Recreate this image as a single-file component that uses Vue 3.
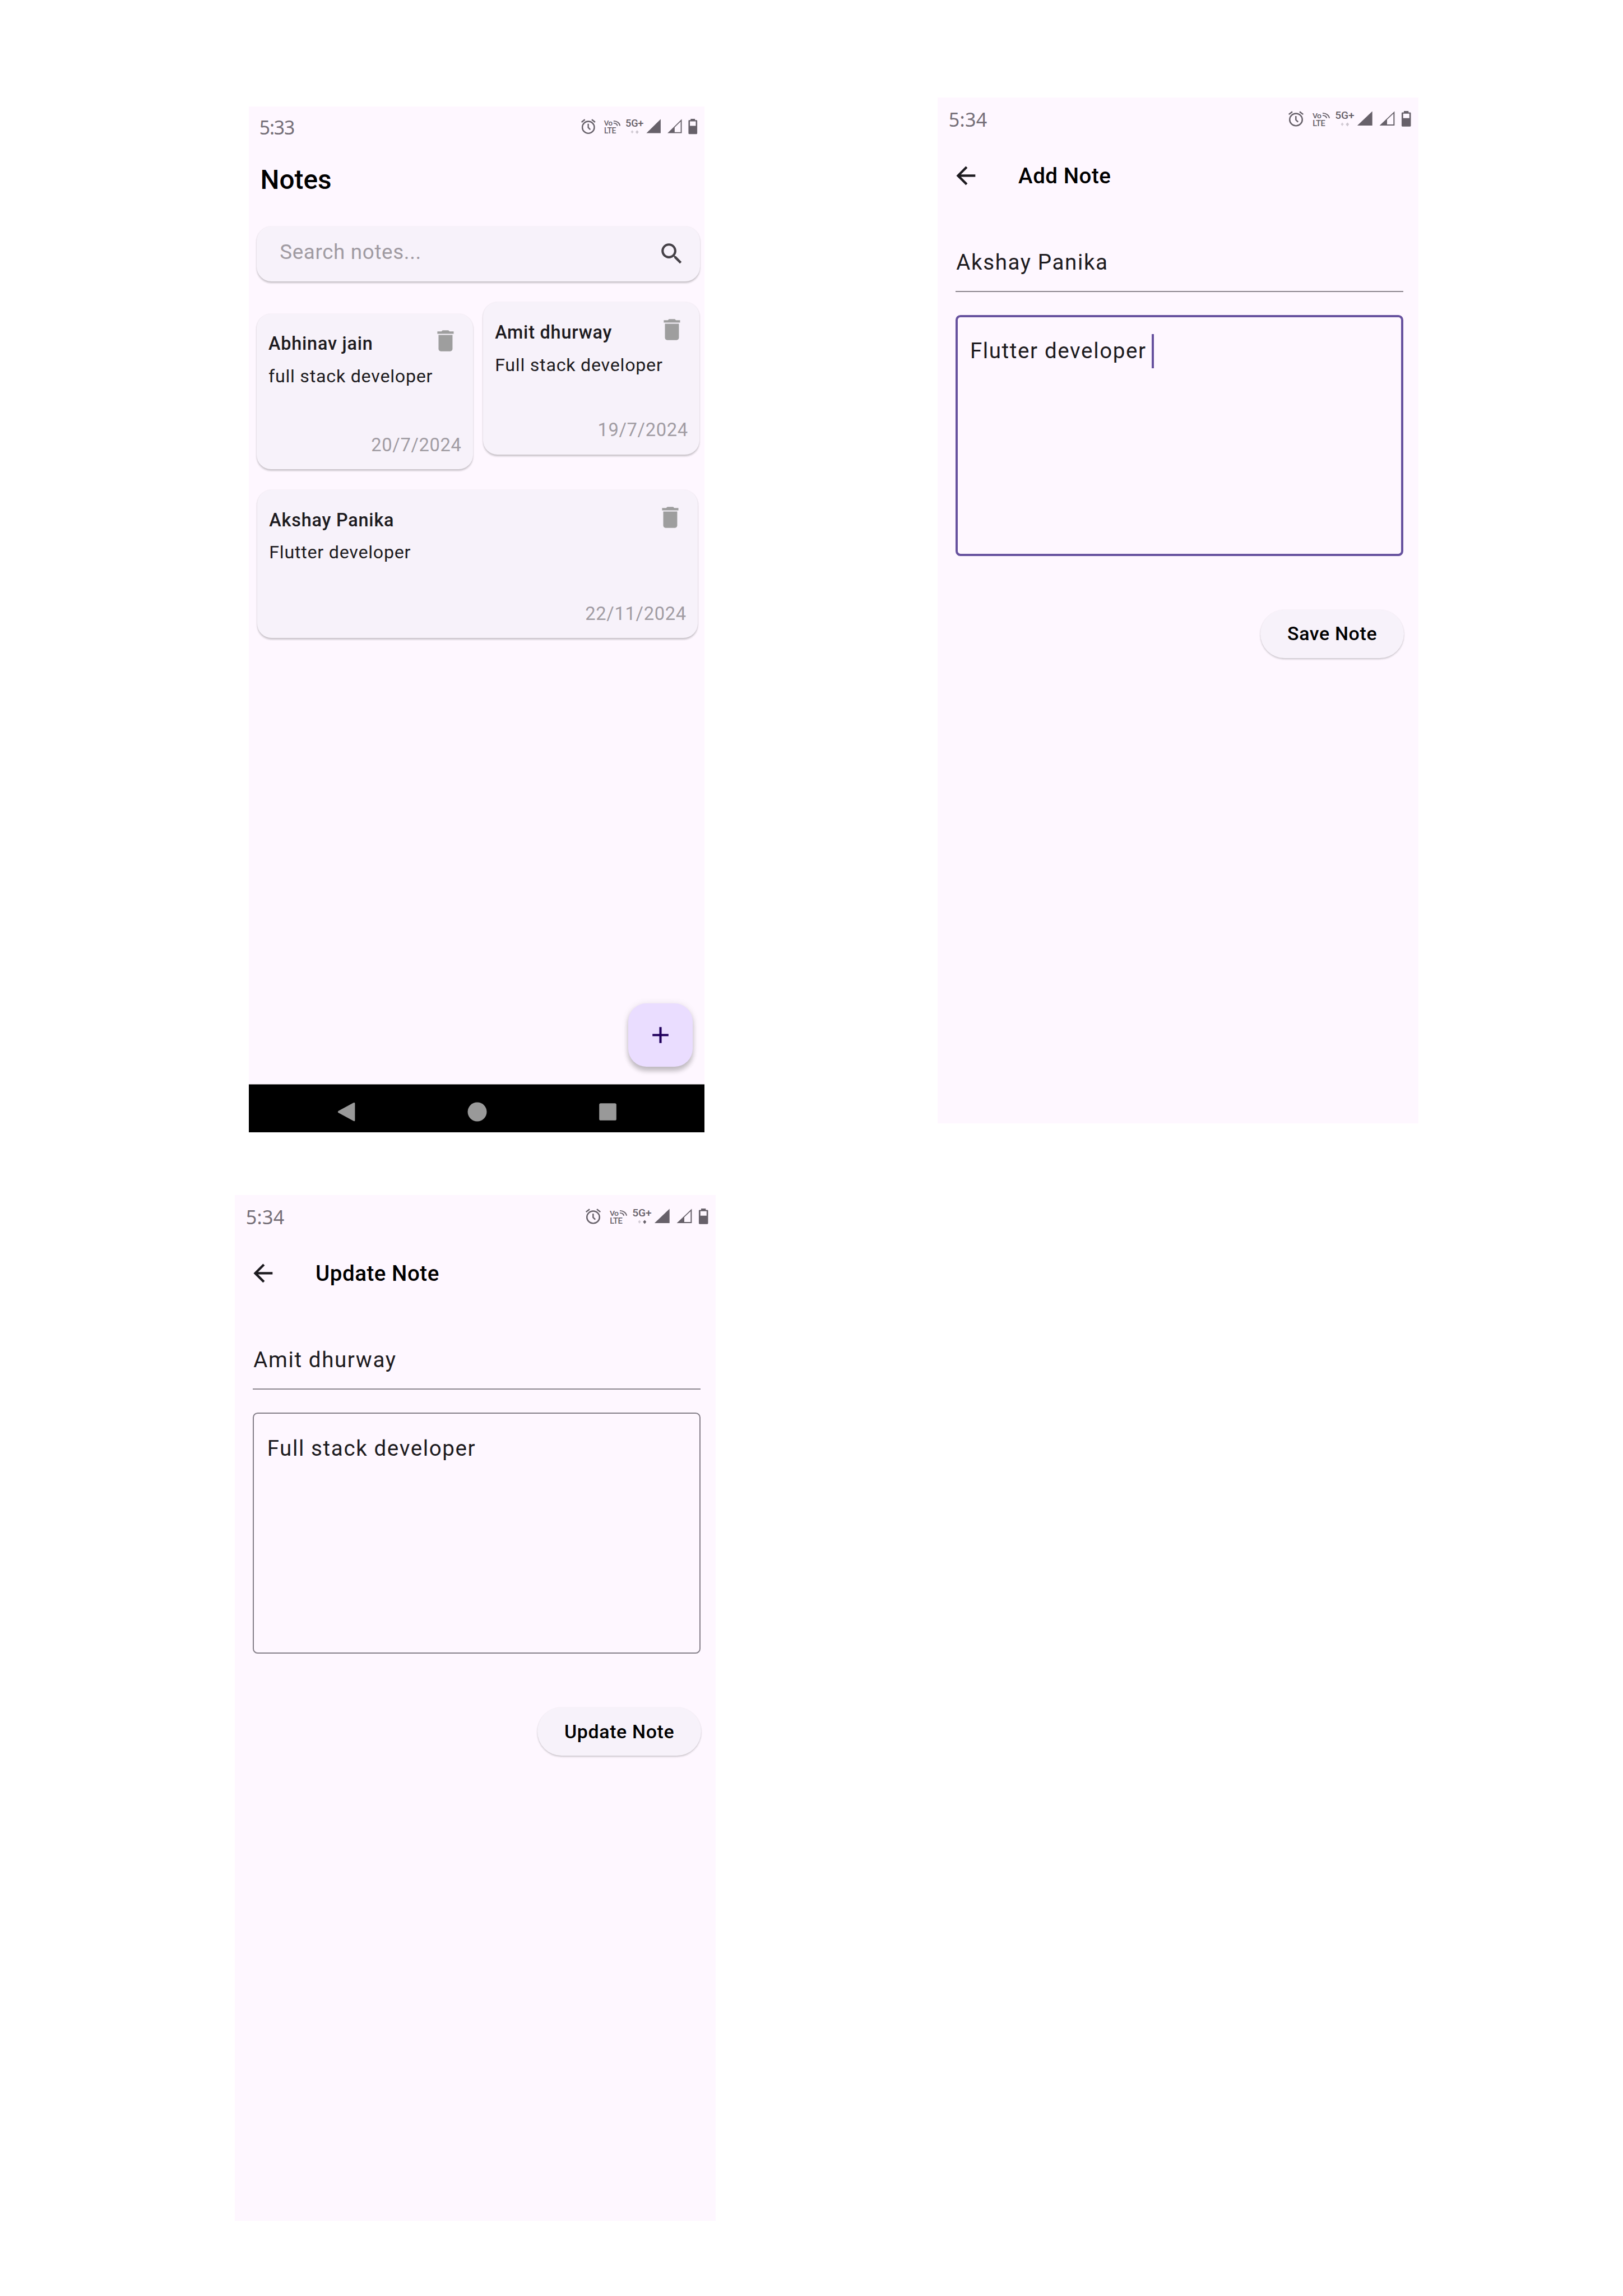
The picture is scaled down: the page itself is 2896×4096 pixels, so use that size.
<script setup>
import { h } from 'vue'

const topNotes = [
  { title: 'Abhinav jain', body: 'full stack developer', date: '20/7/2024', cls: 'lower' },
  { title: 'Amit dhurway', body: 'Full stack developer', date: '19/7/2024', cls: 'upper' },
]
const wideNote = { title: 'Akshay Panika', body: 'Flutter developer', date: '22/11/2024', cls: 'wide' }

const editors = [
  { cls: 'add', heading: 'Add Note', name: 'Akshay Panika', body: 'Flutter developer', focused: true, action: 'Save Note' },
  { cls: 'update', heading: 'Update Note', name: 'Amit dhurway', body: 'Full stack developer', focused: false, action: 'Update Note' },
]

const StatusIcons = (props) =>
  h('svg', { class: 'icons', viewBox: '0 0 236.5 31', preserveAspectRatio: 'none', fill: '#67616a' }, [
    h('g', { fill: 'none', stroke: '#67616a', 'stroke-width': 2.7 }, [
      h('circle', { cx: 14.6, cy: 17.3, r: 12.2 }),
      h('path', { d: 'M.8 6.8 7.6 1.4M28.4 6.8 21.6 1.4M14.4 10v7.6l4.2 4.4' }),
    ]),
    h('text', { class: 'net', x: 46.6, y: 14.2, 'font-size': 15.3, 'letter-spacing': -0.8 }, 'Vo'),
    h('path', {
      d: 'M66 4.400C73 4.400 78.500 8.500 79 14.300M66 8.800C70.500 9 73.300 11 73.800 14.300',
      fill: 'none',
      stroke: '#67616a',
      'stroke-width': 2.1,
    }),
    h('text', { class: 'net', x: 46.8, y: 30, 'font-size': 16, 'letter-spacing': -0.5 }, 'LTE'),
    h('text', { class: 'net', x: 90.2, y: 15.6, 'font-size': 20.8, 'letter-spacing': -0.2 }, '5G+'),
    h('path', { d: 'M104 23l2.800 3.500-2.800 3.500-2.800-3.500z', fill: '#d3ccd5' }),
    h('path', { d: 'M114 23l3.200 3.700-3.200 4-3.200-4z', fill: props.active ? '#67616a' : '#cdc6cf' }),
    h('path', { d: 'M133 29 162 .6V29z' }),
    h('path', { d: 'M176 29 205 .6V29zM190.500 27h12.300V5.400L190.500 17.500z', 'fill-rule': 'evenodd' }),
    h('path', {
      d: 'M223 0h9v2.700h3a1.500 1.500 0 0 1 1.500 1.500V29.500a1.500 1.500 0 0 1-1.500 1.500H220.100a1.500 1.500 0 0 1-1.500-1.500V4.200a1.500 1.500 0 0 1 1.500-1.500H223zM221.600 5.200V14.300H233.600V5.200z',
      'fill-rule': 'evenodd',
    }),
  ])
StatusIcons.props = ['active']

const NoteCard = (props) =>
  h('article', { class: ['card', props.note.cls] }, [
    h('header', { class: 'card-head' }, [
      h('h2', props.note.title),
      h('svg', { class: 'trash', viewBox: '0 0 24 24', fill: '#9e9e9e' }, [
        h('path', { d: 'M6 19c0 1.100.9 2 2 2h8c1.100 0 2-.9 2-2V7H6v12zM19 4h-3.500l-1-1h-5l-1 1H5v2h14V4z' }),
      ]),
    ]),
    h('p', { class: 'body' }, props.note.body),
    h('time', { class: 'date' }, props.note.date),
  ])
NoteCard.props = ['note']
</script>

<template>
  <main class="sheet">
    <section class="phone list">
      <div class="status">
        <span class="clock">5:33</span>
        <StatusIcons :active="false" />
      </div>
      <h1>Notes</h1>
      <div class="search">
        <span>Search notes...</span>
        <svg viewBox="0 0 24 24" fill="#454147">
          <path d="M15.500 14h-.79l-.28-.27C15.410 12.590 16 11.110 16 9.500 16 5.910 13.090 3 9.500 3S3 5.910 3 9.500 5.910 16 9.500 16c1.610 0 3.090-.59 4.230-1.570l.27.28v.79l5 4.990L20.490 19l-4.990-5zm-6 0C7.010 14 5 11.990 5 9.500S7.010 5 9.500 5 14 7.010 14 9.500 11.990 14 9.500 14z" />
        </svg>
      </div>
      <div class="pair">
        <NoteCard v-for="n in topNotes" :key="n.title" :note="n" />
      </div>
      <NoteCard :note="wideNote" />
      <button class="fab" aria-label="Add">
        <svg viewBox="0 0 24 24" fill="#21005d"><path d="M19 13h-6v6h-2v-6H5v-2h6V5h2v6h6v2z" /></svg>
      </button>
      <nav class="navbar">
        <svg viewBox="0 0 40 40"><path d="M34 1.500Q37 0 37 3V37Q37 40 34 38.500L3.500 22Q.5 20 3.500 18z" /></svg>
        <svg viewBox="0 0 40 40"><circle cx="20" cy="20" r="19.400" /></svg>
        <svg viewBox="0 0 40 40"><rect x="2.500" y="2.500" width="35" height="35" rx="3" /></svg>
      </nav>
    </section>

    <section v-for="e in editors" :key="e.cls" class="phone editor" :class="e.cls">
      <div class="status">
        <span class="clock">5:34</span>
        <StatusIcons :active="!e.focused" />
      </div>
      <div class="appbar">
        <svg viewBox="0 0 24 24" fill="#1d1b20"><path d="M20 11H7.830l5.590-5.590L12 4l-8 8 8 8 1.410-1.410L7.830 13H20v-2z" /></svg>
        <h1>{{ e.heading }}</h1>
      </div>
      <div class="name"><span>{{ e.name }}</span></div>
      <div class="area" :class="{ focused: e.focused }">
        <span>{{ e.body }}</span><i v-if="e.focused" class="caret"></i>
      </div>
      <button class="action">{{ e.action }}</button>
    </section>
  </main>
</template>

<style>
html {
  font-size: 8.7572px;
}
body {
  margin: 0;
  background: #fff;
}
</style>

<style scoped>
.sheet {
  display: grid;
  grid-template-columns: 50.65rem 92.9rem 47.45rem 98.1rem;
  grid-template-rows: 243.5rem 224.2rem;
  width: 330.7rem;
  height: 467.7rem;
  overflow: hidden;
  background: #fff;
  font-family: Roboto, 'Liberation Sans', sans-serif;
  color: #1d1b20;
}
.sheet :deep(*) {
  box-sizing: border-box;
}
.sheet :deep(h1),
.sheet :deep(h2),
.sheet :deep(p) {
  margin: 0;
  font-weight: 500;
}
.sheet :deep(button) {
  border: 0;
  padding: 0;
  font-family: inherit;
}
.phone {
  position: relative;
  display: flex;
  flex-direction: column;
  background: #fef7ff;
}
.list {
  grid-area: 1 / 2;
  margin-top: 21.7rem;
  height: 209rem;
}
.add {
  grid-area: 1 / 4;
  margin-top: 19.9rem;
}
.update {
  grid-area: 2 / 1 / 3 / 3;
  margin-left: 47.8rem;
}
.editor {
  width: 98.05rem;
  height: 208.95rem;
}

.status {
  display: flex;
  justify-content: space-between;
  align-items: flex-start;
  height: 9rem;
  padding: 2.55rem 1.5rem 0 2.2rem;
}
.clock {
  margin-top: -0.3rem;
  font-family: 'Noto Sans', sans-serif;
  font-size: 3.85rem;
  font-weight: 400;
  line-height: 4rem;
  letter-spacing: -0.13rem;
  color: #756f78;
}
.status :deep(.icons) {
  width: 23.65rem;
  height: 3.1rem;
  overflow: visible;
}
.status :deep(.net) {
  font-weight: 500;
}
.editor .status {
  padding: 2.75rem 1.6rem 0 2.3rem;
}
.editor .clock {
  margin-top: -0.4rem;
  font-size: 3.9rem;
  letter-spacing: 0.03rem;
}
.editor .status :deep(.icons) {
  width: 24.95rem;
  height: 3.16rem;
}

.list h1 {
  padding-left: 2.4rem;
  font-size: 5.45rem;
  line-height: 12.1rem;
  color: #000;
}
.search {
  display: flex;
  justify-content: space-between;
  align-items: center;
  height: 11.2rem;
  margin: 3.3rem 0.9rem 0 1.6rem;
  padding: 0 2.9rem 0 4.75rem;
  border-radius: 3rem;
  background: #f7f2fa;
  box-shadow: 0 0.25rem 0.35rem rgba(0, 0, 0, 0.2), 0 0 0.3rem rgba(0, 0, 0, 0.06);
}
.search span {
  margin-top: -0.8rem;
  font-size: 4.2rem;
  letter-spacing: 0.075rem;
  color: #a09ba2;
}
.search svg {
  width: 5.65rem;
  height: 5.65rem;
}
.pair {
  display: flex;
  align-items: flex-start;
  gap: 2.1rem;
  margin: 4.3rem 1.05rem 0 1.65rem;
}
.phone :deep(.card) {
  display: flex;
  flex-direction: column;
  width: 44.05rem;
  padding: 2.7rem 2.4rem 2.9rem;
  border-radius: 2.9rem;
  background: #f7f2fa;
  box-shadow: 0 0.25rem 0.35rem rgba(0, 0, 0, 0.2), 0 0 0.3rem rgba(0, 0, 0, 0.06);
}
.phone :deep(.lower) {
  height: 31.7rem;
  margin-top: 2.3rem;
}
.phone :deep(.upper) {
  height: 31rem;
}
.phone :deep(.wide) {
  width: 89.7rem;
  height: 30.2rem;
  margin: 4.2rem 0 0 1.8rem;
}
.phone :deep(.card-head) {
  display: flex;
  justify-content: space-between;
}
.phone :deep(.card-head h2) {
  margin-top: 1.5rem;
  font-size: 3.7rem;
  line-height: 4rem;
  letter-spacing: 0.09rem;
}
.phone :deep(.trash) {
  width: 5.7rem;
  height: 5.7rem;
  margin-right: 0.3rem;
}
.phone :deep(.card .body) {
  margin-top: 2.35rem;
  font-size: 3.68rem;
  font-weight: 400;
  line-height: 4rem;
  letter-spacing: 0.085rem;
}
.phone :deep(.date) {
  margin-top: auto;
  align-self: flex-end;
  margin-right: -0.1rem;
  font-size: 3.73rem;
  line-height: 4rem;
  letter-spacing: 0.075rem;
  color: #a19ca3;
}
.fab {
  position: absolute;
  right: 2.4rem;
  bottom: 13.45rem;
  display: flex;
  align-items: center;
  justify-content: center;
  width: 13.1rem;
  height: 12.9rem;
  border-radius: 3.7rem;
  background: #eaddff;
  box-shadow: 0 0.8rem 1rem rgba(0, 0, 0, 0.2), 0 0.2rem 1.4rem rgba(0, 0, 0, 0.1);
}
.fab svg {
  width: 5.6rem;
  height: 5.6rem;
}
.navbar {
  display: flex;
  align-items: center;
  gap: 22.6rem;
  height: 9.8rem;
  margin-top: auto;
  padding: 1.4rem 0 0 17.95rem;
  border-top: 0.2rem solid #777;
  background: #000;
}
.navbar svg {
  width: 4rem;
  height: 4rem;
  fill: #999;
}

.appbar {
  display: flex;
  align-items: center;
  height: 13.8rem;
  padding-left: 2.9rem;
}
.appbar svg {
  width: 5.8rem;
  height: 5.8rem;
}
.appbar h1 {
  margin-left: 7.8rem;
  font-size: 4.4rem;
  letter-spacing: 0.06rem;
  color: #000;
}
.name {
  display: flex;
  align-items: flex-end;
  height: 16.8rem;
  margin: 0 3.1rem 0 3.65rem;
  padding: 0 0 2.8rem 0.2rem;
  border-bottom: 0.3rem solid #8b858e;
}
.name span,
.area span {
  font-size: 4.4rem;
  line-height: 6rem;
  letter-spacing: 0.185rem;
}
.area {
  display: flex;
  align-items: flex-start;
  height: 49.1rem;
  margin: 4.7rem 3.1rem 0 3.65rem;
  padding: 4.1rem 2.75rem;
  border: 0.25rem solid #857f89;
  border-radius: 1rem;
}
.area.focused {
  padding: 3.85rem 2.55rem;
  border: 0.5rem solid #67529f;
}
.caret {
  width: 0.4rem;
  height: 6.9rem;
  margin: -0.4rem 0 0 1.1rem;
  background: #67529f;
}
.sheet .action {
  align-self: flex-end;
  height: 9.9rem;
  margin: 10.9rem 3.05rem 0 0;
  padding-left: 0.1rem;
  border-radius: 5rem;
  background: #f7f2fa;
  box-shadow: 0 0.25rem 0.35rem rgba(0, 0, 0, 0.18), 0 0 0.3rem rgba(0, 0, 0, 0.06);
  font-size: 3.87rem;
  font-weight: 500;
  letter-spacing: 0.075rem;
  color: #000;
}
.add .action {
  width: 29.2rem;
}
.update .action {
  width: 33.3rem;
}
</style>
